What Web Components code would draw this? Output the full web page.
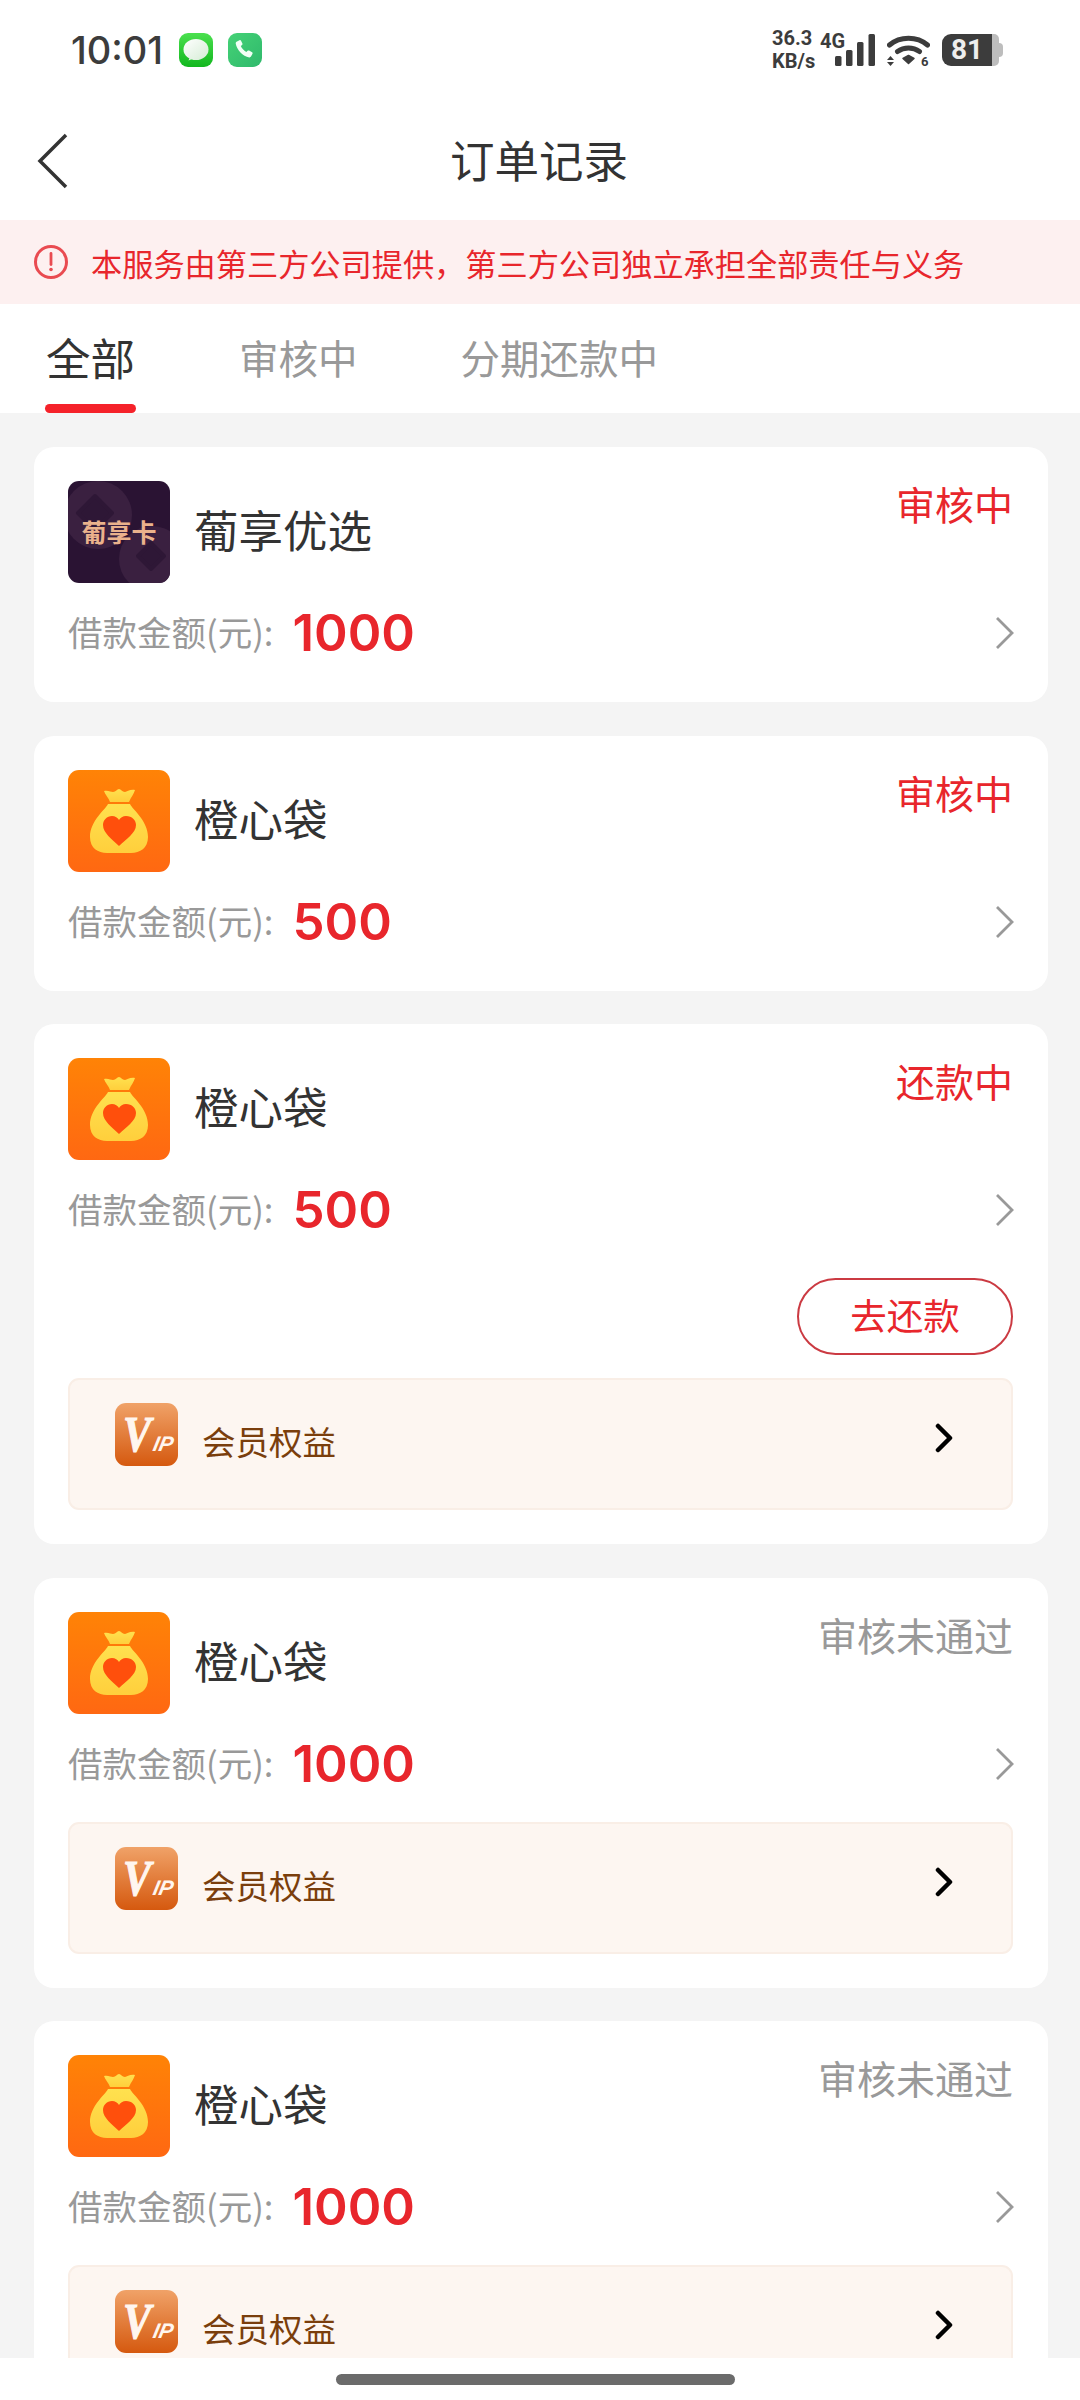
<!DOCTYPE html>
<html lang="zh">
<head>
<meta charset="utf-8">
<title>订单记录</title>
<style>
  html, body { margin: 0; padding: 0; background: #fff; }
  body { width: 1080px; height: 2400px; overflow: hidden; font-family: "Noto Sans CJK SC", "Noto Sans", sans-serif; }
</style>
</head>
<body>
<order-page>
  <status-bar slot="top"></status-bar>
  <nav-bar slot="top">订单记录</nav-bar>
  <notice-banner slot="top">本服务由第三方公司提供，第三方公司独立承担全部责任与义务</notice-banner>
  <order-tabs slot="top"></order-tabs>

  <order-card logo="putao" name="葡享优选" status="审核中" amount="1000"></order-card>
  <order-card logo="orange" name="橙心袋" status="审核中" amount="500"></order-card>
  <order-card logo="orange" name="橙心袋" status="还款中" amount="500">
    <repay-button>去还款</repay-button>
    <vip-row>会员权益</vip-row>
  </order-card>
  <order-card logo="orange" name="橙心袋" status="审核未通过" muted amount="1000">
    <vip-row>会员权益</vip-row>
  </order-card>
  <order-card logo="orange" name="橙心袋" status="审核未通过" muted amount="1000">
    <vip-row>会员权益</vip-row>
  </order-card>

  <home-indicator slot="bottom"></home-indicator>
</order-page>

<script>
const CJK = '"Noto Sans CJK SC", "Noto Sans", sans-serif';

// small helper so every element is written the same way
function shadow(el, html) {
  el.attachShadow({ mode: 'open' }).innerHTML = html;
}

class OrderPage extends HTMLElement {
  constructor() {
    super();
    shadow(this, `
      <style>
        :host { display:flex; flex-direction:column; width:1080px; height:2400px; overflow:hidden; background:#f4f4f4; }
        .list { flex:1; min-height:0; overflow:hidden; display:flex; flex-direction:column; gap:33.500px; padding:34px 32px 0 34px; }
      </style>
      <slot name="top"></slot>
      <div class="list"><slot></slot></div>
      <slot name="bottom"></slot>
    `);
  }
}

class StatusBar extends HTMLElement {
  constructor() {
    super();
    shadow(this, `
      <style>
        :host { display:flex; align-items:center; height:102px; box-sizing:border-box; padding:0 77px 3px 71px; background:#fff; color:#3c3c3c; font-family:Roboto, sans-serif; }
        .time { font-family:Inter, Roboto, sans-serif; font-size:38px; font-weight:500; line-height:1; margin-right:16px; }
        .app { display:block; width:34px; height:34px; margin-right:15px; }
        .right { margin-left:auto; display:flex; align-items:center; }
        .speed { font-size:20px; font-weight:700; line-height:23px; width:63px; }
        .sig { position:relative; width:40px; height:32px; margin-right:12px; }
        .sig svg { display:block; }
        .g4 { position:absolute; left:-15px; top:-4px; font-size:20px; font-weight:700; line-height:23px; }
        .wifi { display:block; margin-right:12px; }
        .bat { display:flex; align-items:center; }
        .bat-body { width:50px; height:32px; box-sizing:border-box; background:#3c3c3c; border-radius:9px 0 0 9px; color:#eee; font-size:28px; font-weight:700; line-height:32px; text-align:center; }
        .bat-rest { width:7px; height:32px; background:#bdbdbd; border-radius:0 5px 5px 0; }
        .bat-tip { width:4px; height:14px; background:#bdbdbd; border-radius:0 4px 4px 0; }
      </style>
      <span class="time">10:01</span>
      <svg class="app" viewBox="0 0 34 34">
        <defs><linearGradient id="m" x1="0" y1="0" x2="0" y2="1"><stop offset="0" stop-color="#4be04f"/><stop offset="1" stop-color="#12b71e"/></linearGradient>
        <linearGradient id="b" x1="0" y1="0" x2="1" y2="1"><stop offset="0" stop-color="#fff"/><stop offset="1" stop-color="#d5ecd5"/></linearGradient></defs>
        <rect width="34" height="34" rx="9" fill="url(#m)"/>
        <ellipse cx="17" cy="16.500" rx="12.500" ry="10.500" fill="url(#b)"/>
        <path d="M11 24l-1.500 3.500 6-2.500z" fill="#e6f3e6"/>
      </svg>
      <svg class="app" viewBox="0 0 34 34">
        <defs><linearGradient id="p" x1="0" y1="0" x2="1" y2="1"><stop offset="0" stop-color="#45d276"/><stop offset="1" stop-color="#2fb96c"/></linearGradient></defs>
        <rect width="34" height="34" rx="9" fill="url(#p)"/>
        <path d="M8.500 8.800l3-1.600c.6-.3 1.100-.1 1.400.4l1.500 3c.3.500.1 1-.3 1.400l-1.300 1.100c1 2.400 3 4.600 5.500 5.900l1.300-1.200c.4-.4 1-.5 1.500-.2l3 1.700c.5.300.7.900.4 1.400l-1.500 2.900c-.4.600-1 .9-1.700.8C14.600 23 9 17 7.700 10.400c-.1-.6.200-1.300.8-1.600z" fill="#f2fff6"/>
      </svg>
      <div class="right">
        <div class="speed">36.3<br>KB/s</div>
        <div class="sig">
          <span class="g4">4G</span>
          <svg width="40" height="32" viewBox="0 0 40 32" fill="#3c3c3c">
            <rect x="0" y="22" width="6.500" height="10" rx="1.500"/>
            <rect x="11" y="16" width="6.500" height="16" rx="1.500"/>
            <rect x="22" y="8" width="6.500" height="24" rx="1.500"/>
            <rect x="33.500" y="0" width="6.500" height="32" rx="1.500"/>
          </svg>
        </div>
        <svg class="wifi" width="43" height="40" viewBox="0 -3.500 43 40" fill="none">
          <path d="M2.500 11.500C13 2.500 30 2.500 40.500 11.500" stroke="#3c3c3c" stroke-width="5" stroke-linecap="round"/>
          <path d="M10.500 18C17 13.300 26 13.300 32.500 18" stroke="#3c3c3c" stroke-width="5" stroke-linecap="round"/>
          <path d="M16 25l5.500-3 5.500 3-5.500 5z" fill="#3c3c3c" stroke="#3c3c3c" stroke-width="1.500" stroke-linejoin="round"/>
          <path d="M3.500 22.500L0 26.500h7zM0 28.500h7l-3.500 4z" fill="#3c3c3c"/>
          <text x="34" y="32" font-family="Roboto, sans-serif" font-weight="700" font-size="13" fill="#3c3c3c">6</text>
        </svg>
        <div class="bat"><div class="bat-body">81</div><div class="bat-rest"></div><div class="bat-tip"></div></div>
      </div>
    `);
  }
}

class NavBar extends HTMLElement {
  constructor() {
    super();
    shadow(this, `
      <style>
        :host { display:grid; grid-template-columns:100px 1fr 100px; align-items:center; height:118px; background:#fff; color:#333; font-family:${CJK}; }
        svg { display:block; margin-left:37px; }
        .title { text-align:center; font-size:44.500px; line-height:60px; margin:-4px 0 0 -2px; }
      </style>
      <svg width="32" height="56" viewBox="0 0 32 56" fill="none"><path d="M29 2L3 28l26 26" stroke="#333" stroke-width="3.500"/></svg>
      <div class="title"><slot></slot></div>
      <span></span>
    `);
  }
}

class NoticeBanner extends HTMLElement {
  constructor() {
    super();
    shadow(this, `
      <style>
        :host { display:flex; align-items:center; height:84px; padding-left:33px; background:#fdf0f0; color:#e8262c; font-family:${CJK}; font-size:31.200px; white-space:nowrap; }
        svg { display:block; margin-right:22px; flex:none; }
      </style>
      <svg width="36" height="36" viewBox="0 0 36 36" fill="none">
        <circle cx="18" cy="18" r="15.500" stroke="#e94b51" stroke-width="3"/>
        <path d="M18 9.500v11" stroke="#e94b51" stroke-width="2.800" stroke-linecap="round"/>
        <circle cx="18" cy="25.500" r="1.800" fill="#e94b51"/>
      </svg>
      <slot></slot>
    `);
  }
}

class OrderTabs extends HTMLElement {
  constructor() {
    super();
    shadow(this, `
      <style>
        :host { display:flex; gap:103px; height:109px; box-sizing:border-box; padding:23px 0 0 45px; background:#fff; font-family:${CJK}; color:#999; font-size:39.500px; line-height:60px; white-space:nowrap; }
        .on { display:flex; flex-direction:column; align-items:center; color:#333; font-size:44.500px; }
        .bar { width:91px; height:9px; margin-top:17px; background:#f5222a; border-radius:5px; }
      </style>
      <div class="on">全部<div class="bar"></div></div>
      <div>审核中</div>
      <div>分期还款中</div>
    `);
  }
}

class BrandLogo extends HTMLElement {
  static get observedAttributes() { return ['type']; }
  constructor() {
    super();
    this.attachShadow({ mode: 'open' });
  }
  connectedCallback() { this.render(); }
  attributeChangedCallback() { this.render(); }
  render() {
    const t = this.getAttribute('type');
    const id = 'g' + Math.random().toString(36).slice(2, 7);
    const art = t === 'putao' ? `
      <rect width="102" height="102" rx="11" fill="#2a1333"/>
      <clipPath id="${id}"><rect width="102" height="102" rx="11"/></clipPath>
      <g clip-path="url(#${id})">
        <circle cx="30" cy="34" r="34" fill="#3a2040"/>
        <circle cx="84" cy="78" r="33" fill="#3a2040"/>
        <path d="M27 15l17 17-17 17-17-17z" fill="#2e1736" stroke="#2e1736" stroke-width="4" stroke-linejoin="round"/>
        <path d="M83 62l13 13-13 13-13-13z" fill="#2e1736" stroke="#2e1736" stroke-width="4" stroke-linejoin="round"/>
      </g>
      <text x="51" y="61" text-anchor="middle" font-family="'Noto Sans CJK SC', sans-serif" font-weight="700" font-size="25" fill="#eab28c">葡享卡</text>
    ` : `
      <defs>
        <linearGradient id="${id}" x1="0" y1="0" x2="0" y2="1"><stop offset="0" stop-color="#ff8306"/><stop offset="1" stop-color="#ff6812"/></linearGradient>
        <linearGradient id="${id}b" x1="0" y1="0" x2="0" y2="1"><stop offset="0" stop-color="#ffe14f"/><stop offset="1" stop-color="#ffcf3c"/></linearGradient>
      </defs>
      <rect width="102" height="102" rx="11" fill="url(#${id})"/>
      <path d="M36 21c4-1 7 1 9 1 3 0 4-3 6-3s3 3 6 3c2 0 5-3 10-2-1 4-4 7-6 12H42c-1-4-5-7-6-11z" fill="url(#${id}b)"/>
      <path d="M40 34h22c3 6 18 17 18 33 0 11-8 16-17 16H39c-9 0-17-5-17-16 0-16 15-27 18-33z" fill="url(#${id}b)"/>
      <path d="M51 76C44 69 35 63 35 55c0-5 4-9 9-9 3 0 6 2 7 4 1-2 4-4 7-4 6 0 10 4 10 9 0 8-10 14-17 21z" fill="#ff4f0c"/>
    `;
    this.shadowRoot.innerHTML = `
      <style>:host { display:block; width:102px; height:102px; flex:none; } svg { display:block; }</style>
      <svg width="102" height="102" viewBox="0 0 102 102">${art}</svg>
    `;
  }
}

class OrderCard extends HTMLElement {
  constructor() {
    super();
    this.attachShadow({ mode: 'open' });
  }
  connectedCallback() {
    const muted = this.hasAttribute('muted');
    this.shadowRoot.innerHTML = `
      <style>
        :host { display:block; flex:none; background:#fff; border-radius:20px; padding:34px 35px 34px 34px; font-family:${CJK}; }
        .head { display:flex; align-items:flex-start; }
        .name { margin-left:24px; height:102px; line-height:96px; font-size:44.500px; color:#333; }
        .status { margin-left:auto; font-size:39px; line-height:44px; color:${muted ? '#999' : '#e8262c'}; white-space:nowrap; }
        .row { display:flex; align-items:center; height:54px; margin-top:23px; padding-bottom:8px; }
        .label { font-size:34.500px; line-height:48px; margin-top:-4px; color:#999; white-space:nowrap; }
        .amount { margin-left:19px; font-family:Inter, Roboto, sans-serif; font-weight:600; font-size:51px; line-height:54px; color:#e8262c; }
        .go { display:block; margin:0 -2px 0 auto; }
      </style>
      <div class="head">
        <brand-logo type="${this.getAttribute('logo')}"></brand-logo>
        <span class="name">${this.getAttribute('name')}</span>
        <span class="status">${this.getAttribute('status')}</span>
      </div>
      <div class="row">
        <span class="label">借款金额(元):</span>
        <span class="amount">${this.getAttribute('amount')}</span>
        <svg class="go" width="21" height="34" viewBox="0 0 21 34" fill="none"><path d="M3 2l15 15L3 32" stroke="#999" stroke-width="2.800"/></svg>
      </div>
      <slot></slot>
    `;
  }
}

class RepayButton extends HTMLElement {
  constructor() {
    super();
    shadow(this, `
      <style>
        :host { display:flex; justify-content:flex-end; margin-top:33px; font-family:${CJK}; }
        div { width:216px; height:77px; box-sizing:border-box; border:2.500px solid #cb3a42; border-radius:39px; color:#e8262c; font-size:36.500px; line-height:69px; text-align:center; }
      </style>
      <div><slot></slot></div>
    `);
  }
}

class VipRow extends HTMLElement {
  constructor() {
    super();
    shadow(this, `
      <style>
        :host { display:flex; align-items:flex-start; height:132px; box-sizing:border-box; margin-top:23px; padding:23px 58px 0 45px; background:#fdf6f1; border:2px solid #f9eee6; border-radius:11px; font-family:${CJK}; color:#7a3e0c; }
        .badge { display:block; flex:none; }
        .txt { margin:15px 0 0 24px; font-size:33.500px; line-height:46px; white-space:nowrap; }
        .go { display:block; margin:20px 0 0 auto; }
      </style>
      <svg class="badge" width="63" height="63" viewBox="0 0 63 63">
        <defs><linearGradient id="v" x1="0" y1="0" x2="0" y2="1"><stop offset="0" stop-color="#f0a268"/><stop offset="1" stop-color="#d5590f"/></linearGradient></defs>
        <rect width="63" height="63" rx="11" fill="url(#v)"/>
        <text transform="translate(8 48) scale(1 1.200)" font-family="'Liberation Serif', serif" font-weight="700" font-style="italic" font-size="42" fill="#fff6ef" stroke="#fff6ef" stroke-width="1">V</text>
        <text transform="translate(37 48) skewX(-12)" font-family="'Liberation Sans', sans-serif" font-weight="700" font-style="italic" font-size="21" fill="#fff6ef">IP</text>
      </svg>
      <span class="txt"><slot></slot></span>
      <svg class="go" width="18" height="30" viewBox="0 0 18 30" fill="none"><path d="M3 3l12 12L3 27" stroke="#000" stroke-width="4.500" stroke-linecap="round" stroke-linejoin="round"/></svg>
    `);
  }
}

class HomeIndicator extends HTMLElement {
  constructor() {
    super();
    shadow(this, `
      <style>
        :host { display:block; flex:none; height:42px; box-sizing:border-box; padding:16px 0 0 336px; background:#fff; }
        div { width:399px; height:11px; background:#6b6b6b; border-radius:6px; }
      </style>
      <div></div>
    `);
  }
}

customElements.define('order-page', OrderPage);
customElements.define('status-bar', StatusBar);
customElements.define('nav-bar', NavBar);
customElements.define('notice-banner', NoticeBanner);
customElements.define('order-tabs', OrderTabs);
customElements.define('brand-logo', BrandLogo);
customElements.define('order-card', OrderCard);
customElements.define('repay-button', RepayButton);
customElements.define('vip-row', VipRow);
customElements.define('home-indicator', HomeIndicator);
</script>
</body>
</html>
